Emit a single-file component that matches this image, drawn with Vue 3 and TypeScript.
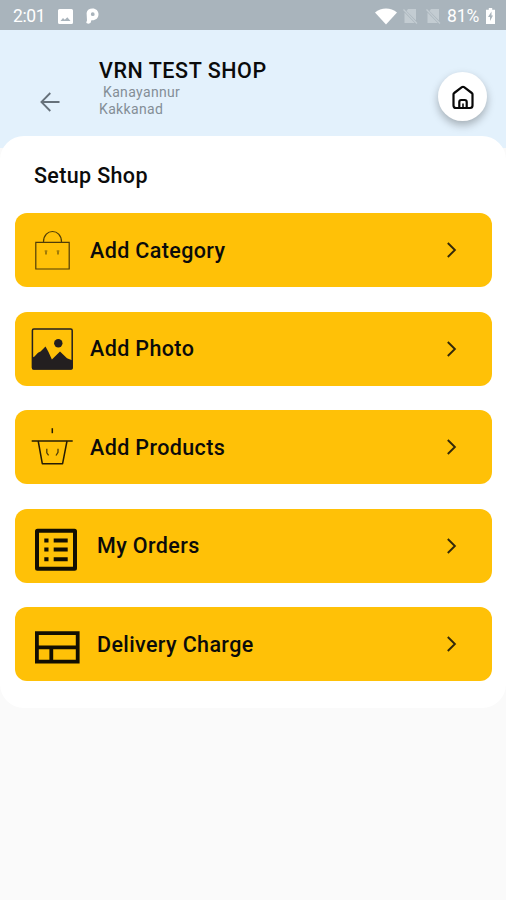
<script setup lang="ts">
type IconName = 'bag' | 'photo' | 'basket' | 'list' | 'table'

interface MenuItem {
  label: string
  icon: IconName
  wide?: boolean
}

const items: MenuItem[] = [
  { label: 'Add Category', icon: 'bag' },
  { label: 'Add Photo', icon: 'photo' },
  { label: 'Add Products', icon: 'basket' },
  { label: 'My Orders', icon: 'list', wide: true },
  { label: 'Delivery Charge', icon: 'table', wide: true },
]
</script>

<template>
  <div class="screen">
    <div class="status">
      <span class="time">2:01</span>
      <svg class="s-photo" width="15" height="15" viewBox="0 0 15 15">
        <path fill="#fff" fill-rule="evenodd" d="M1.500 0h12A1.500 1.500 0 0 1 15 1.500v12a1.500 1.500 0 0 1-1.500 1.500h-12A1.500 1.500 0 0 1 0 13.500v-12A1.500 1.500 0 0 1 1.500 0zM2.500 12h10L9.300 8.300 6.800 10.800 5 9z" />
      </svg>
      <svg class="s-p" width="13" height="16" viewBox="0 0 13 16">
        <path fill="#fff" fill-rule="evenodd" d="M1 12.500L0.600 5C1 1.800 3.500.4 6.500.4c3.500 0 6 2.300 6 5.800 0 3.700-2.500 6-6.300 6h-.8l-.8 2.600C4 16 .2 16 .3 14.200zM6.700 4.300a1.900 1.900 0 1 0 .1 3.800 1.900 1.900 0 0 0-.1-3.800z" />
      </svg>
      <span class="spacer"></span>
      <svg class="s-wifi" width="22" height="17" viewBox="0 0 22 17">
        <path fill="#fff" d="M0 4.500C6-.8 16-.8 22 4.500L11 16.500z" />
      </svg>
      <svg v-for="n in 2" :key="n" class="s-sim" width="15" height="16" viewBox="0 0 15 16">
        <path fill="#c3ccd2" d="M5 1h8v11.500L3.500 3zM1.500 4.500L11.800 15H1.500z" />
        <path stroke="#c3ccd2" stroke-width="1.300" d="M.5 1.500L14 15.500" />
      </svg>
      <span class="pct">81%</span>
      <svg class="s-bat" width="9" height="16" viewBox="0 0 9 16">
        <path fill="#fff" fill-rule="evenodd" d="M2.800 0h3.400v1.700H9V16H0V1.700h2.800zM5.500 3.500L2 9h2v4l3-5.500H5.500z" />
      </svg>
    </div>

    <header class="header">
      <svg class="back" width="20" height="20" viewBox="0 0 20 20" fill="none" stroke="#66717a" stroke-width="1.800">
        <path d="M19.500 10H1.500M10.300 1L1.400 10l8.900 9" />
      </svg>
      <div class="shop">
        <h1>VRN TEST SHOP</h1>
        <p class="area">Kanayannur</p>
        <p class="town">Kakkanad</p>
      </div>
      <button class="home" aria-label="Home">
        <svg width="24" height="26" viewBox="0 0 24 26" fill="none" stroke="#080808" stroke-width="2.200" stroke-linejoin="round">
          <path d="M2.500 10.300Q2.500 9.500 3.200 9L10.900 3.200Q12 2.400 13.100 3.200L20.800 9Q21.500 9.500 21.500 10.300V21.500Q21.500 24 19 24H5Q2.500 24 2.500 21.500z" />
          <path d="M8.300 24v-6q0-2 2-2h3.400q2 0 2 2v6" />
          <path stroke-width="1.600" d="M12 19.500V24" />
        </svg>
      </button>
    </header>

    <main class="sheet">
      <h2>Setup Shop</h2>
      <div class="list">
        <button v-for="item in items" :key="item.label" class="card" :class="{ wide: item.wide }">
          <svg class="icon" width="68" height="74" viewBox="0 0 68 74" fill="none">
            <g v-if="item.icon === 'bag'" stroke="#4f3d08" stroke-width="1.200">
              <path d="M20.800 29.300H54.200V56H20.800zM28.500 29C28.500 15 46.500 15 46.500 29" />
              <path stroke="#8a6a08" stroke-width="1.600" d="M31 37.500v4M43 37.500v4" />
              <path stroke="#a98208" d="M29.500 38h3M41.500 38h3" />
            </g>
            <g v-else-if="item.icon === 'photo'">
              <rect x="17.400" y="16.900" width="39.800" height="40" rx="1.500" stroke="#231f20" stroke-width="1.500" />
              <circle cx="43.300" cy="31.200" r="4.200" fill="#231f20" />
              <path fill="#231f20" d="M17 45.800L19.500 44.600 23 40.800 25.500 39.500 30.500 34.500 33.500 40 36.900 47.500 45 39.500 52 46.300 57.700 48.500V56a1.500 1.500 0 0 1-1.500 1.500H18.500A1.500 1.500 0 0 1 17 56z" />
            </g>
            <g v-else-if="item.icon === 'basket'" stroke="#251c05">
              <path stroke-width="1.600" d="M16.700 31H57.700" />
              <path stroke-width="1.500" stroke-linejoin="round" d="M23.200 31L27.300 53.700H47.600L52 31" />
              <path stroke-width="1.500" d="M37.300 18.200v5" />
              <path stroke="#4f3d08" stroke-width="1.300" d="M31.800 38.800v4l1.800 2.500M43 38.800v3.500L41 45.500" />
            </g>
            <g v-else-if="item.icon === 'list'" stroke="#130f02">
              <rect x="22" y="21.700" width="38" height="38" rx="0.500" stroke-width="4" />
              <path stroke-width="4" d="M29.300 31.500h4.200M38.700 31.500h14M29.300 40.600h4.200M38.700 40.600h14M29.300 50.200h4.200M38.700 50.200h14" />
            </g>
            <g v-else stroke="#130f02" stroke-width="3.800">
              <path d="M21.900 26.100H62.700V54.700H21.900zM22 40.300H62.700M36.300 40.300V54.700" />
            </g>
          </svg>
          <span class="label">{{ item.label }}</span>
          <svg class="chev" width="12" height="18" viewBox="0 0 12 18" fill="none" stroke="#33290a" stroke-width="1.900">
            <path d="M1.800 2L8.900 9l-7.100 7" />
          </svg>
        </button>
      </div>
    </main>
  </div>
</template>

<style>
body {
  margin: 0;
  background: #fafafa;
}
</style>

<style scoped>
.screen {
  min-height: 900px;
  background: #fafafa;
  font-family: Roboto, "Liberation Sans", sans-serif;
  color: #0b0b0b;
}
.status {
  display: flex;
  align-items: center;
  box-sizing: border-box;
  height: 30px;
  padding: 2px 11px 0 13px;
  background: #a9b4bc;
  color: #fff;
  font-size: 17.500px;
}
.time {
  width: 45px;
  letter-spacing: -0.400px;
}
.s-p {
  margin-left: 13px;
}
.spacer {
  flex: 1;
}
.s-wifi {
  margin-right: 6px;
}
.s-sim {
  margin-right: 8px;
}
.pct {
  width: 39px;
  margin-left: -2px;
  letter-spacing: -0.100px;
}
.header {
  display: flex;
  align-items: flex-start;
  box-sizing: border-box;
  height: 118px;
  padding: 0 19px 0 40px;
  background: #e3f1fc;
}
.back {
  margin-top: 61.500px;
}
.shop {
  flex: 1;
  margin: 27.500px 0 0 39px;
}
h1 {
  margin: 0;
  font-size: 21.500px;
  line-height: 26px;
  font-weight: 500;
  letter-spacing: 0.550px;
}
p {
  margin: 0;
  font-size: 14px;
  line-height: 17.500px;
  letter-spacing: 0.350px;
  color: #848e96;
}
.area {
  padding-left: 4px;
}
button {
  border: 0;
  padding: 0;
  font: inherit;
  color: inherit;
}
.home {
  display: flex;
  align-items: center;
  justify-content: center;
  width: 49px;
  height: 49px;
  margin-top: 42px;
  border-radius: 50%;
  background: #fff;
  box-shadow: 0 4px 8px rgba(0, 0, 0, 0.28);
}
.sheet {
  box-sizing: border-box;
  height: 572px;
  margin-top: -12px;
  padding: 26px 14px 0 15px;
  border-radius: 24px;
  background: #fff;
}
h2 {
  margin: 0 0 24px 19px;
  font-size: 21.500px;
  line-height: 27px;
  font-weight: 500;
  letter-spacing: 0.350px;
}
.list {
  display: grid;
  gap: 24.500px;
}
.card {
  display: flex;
  align-items: center;
  height: 74px;
  padding-right: 34px;
  border-radius: 12px;
  background: #ffc107;
  text-align: left;
}
.label {
  flex: 1;
  padding-left: 7px;
  font-size: 21.500px;
  font-weight: 500;
  letter-spacing: 0.380px;
}
.wide .label {
  padding-left: 14px;
}
</style>
